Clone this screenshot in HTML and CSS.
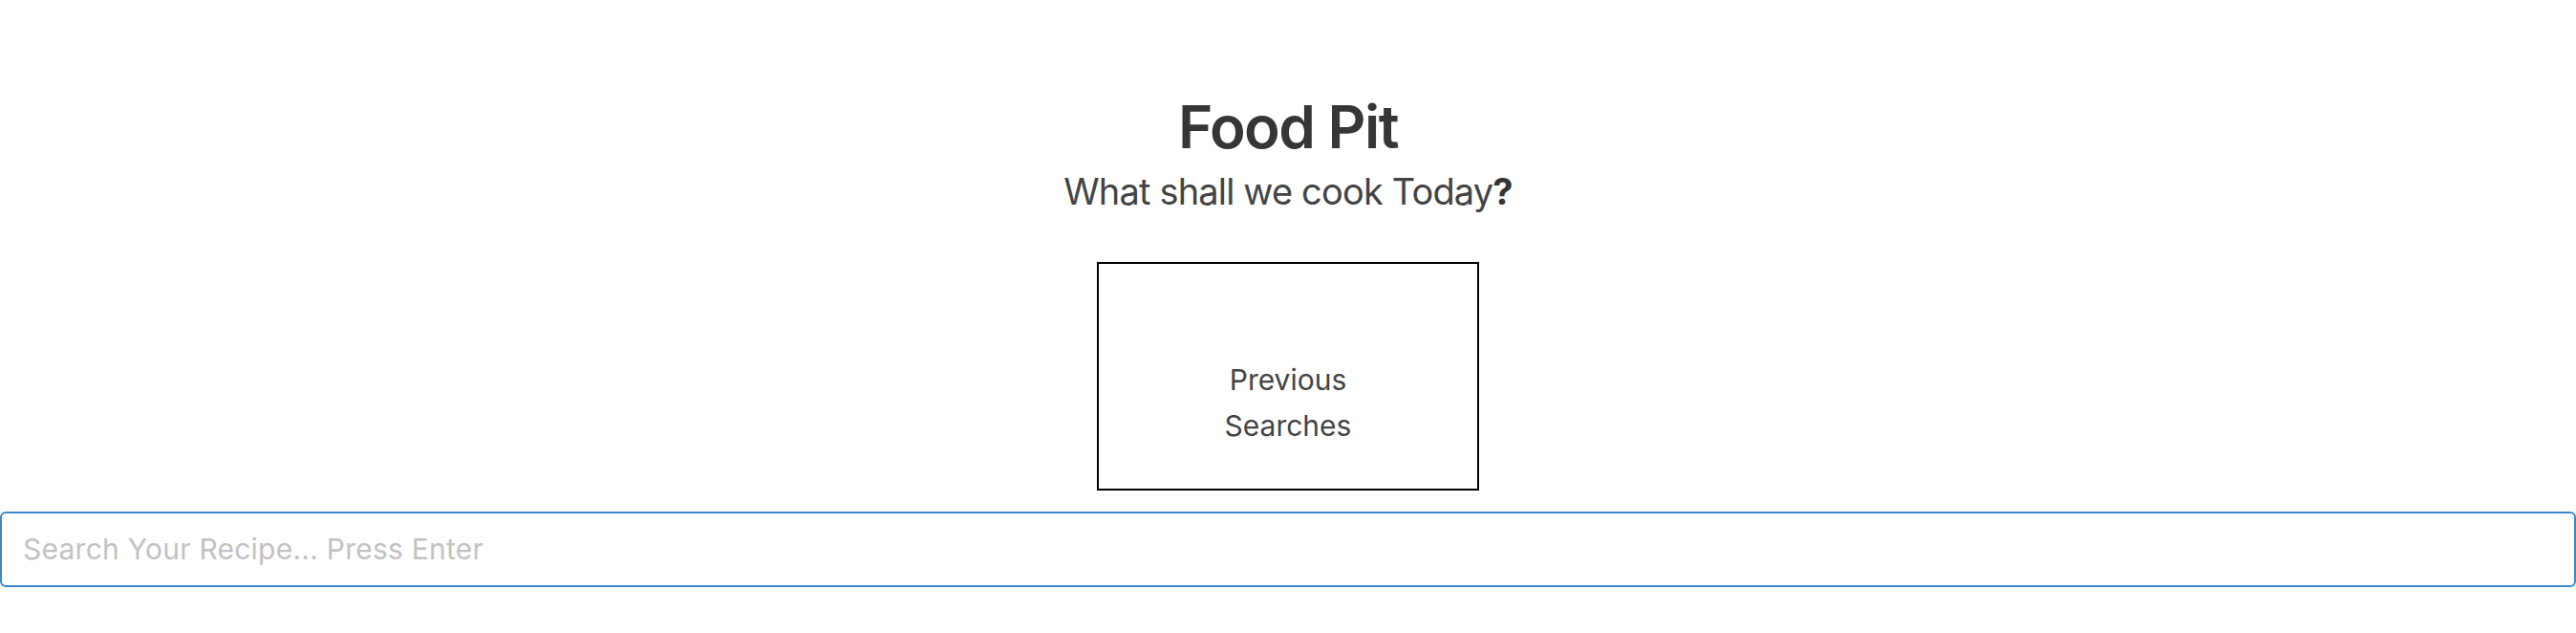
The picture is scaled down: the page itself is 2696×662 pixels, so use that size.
FILE: index.html
```html
<!DOCTYPE html>
<html lang="en">
<head>
<meta charset="utf-8">
<title>Food Pit</title>
<link rel="stylesheet" href="styles.css">
</head>
<body>
<main class="page">
  <header class="hero">
    <h1 class="title">Food Pit</h1>
    <p class="subtitle">What shall we cook Today<b>?</b></p>
  </header>
  <section class="history">
    <div class="history-box">Previous<br>Searches</div>
  </section>
  <input class="search" type="text" placeholder="Search Your Recipe... Press Enter">
</main>
</body>
</html>
```

FILE: styles.css
```css
* { box-sizing: border-box; }
html, body { margin: 0; padding: 0; background: #fff; }
body {
  font-family: Inter, "Noto Sans", "Liberation Sans", sans-serif;
  color: #333;
}
.page {
  display: flex;
  flex-direction: column;
  align-items: stretch;
  padding-top: 96px;
}
.hero { text-align: center; }
.title {
  margin: 0;
  font-size: 62px;
  line-height: 1.2;
  font-weight: 600;
  letter-spacing: -0.025em;
  color: #363636;
}
.subtitle {
  margin: 8px 0 0;
  font-size: 38px;
  line-height: 1.2;
  letter-spacing: -0.022em;
  color: #444;
}
.subtitle b { font-weight: 700; color: #363636; }
.history {
  display: flex;
  justify-content: center;
  margin-top: 50px;
}
.history-box {
  width: 400px;
  height: 239px;
  border: 2px solid #000;
  padding-top: 97px;
  text-align: center;
  font-size: 30px;
  line-height: 48px;
  color: #444;
}
.search {
  display: block;
  width: 100%;
  height: 79px;
  margin: 22px 0 0;
  border: 2px solid #3b88cc;
  border-radius: 6px;
  padding: 0 22px;
  font-family: Inter, "Noto Sans", "Liberation Sans", sans-serif;
  font-size: 30px;
  letter-spacing: 0.008em;
  color: #333;
  background: #fff;
  outline: none;
}
.search::placeholder { color: #c2c2c2; }
```
